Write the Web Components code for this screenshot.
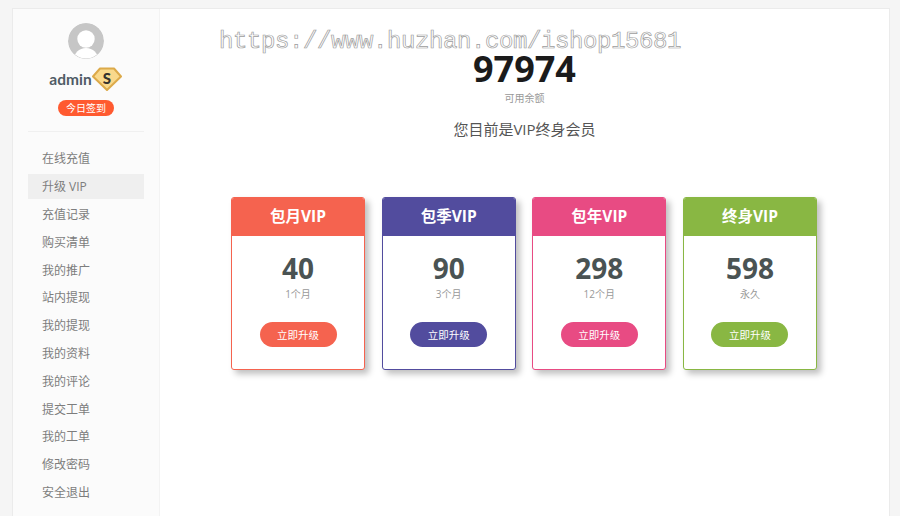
<!DOCTYPE html>
<html lang="zh-CN"><head><meta charset="utf-8"><title>VIP</title>
<style>
html,body{margin:0;height:100%;overflow:hidden;background:#f5f5f5}
body{font-family:"Open Sans","Noto Sans CJK SC",sans-serif;padding:8px 10px 0 12px;box-sizing:border-box;height:516px}
</style></head><body>
<user-shell>
<side-bar slot="side" name="admin">
<nav-item>在线充值</nav-item><nav-item active>升级 VIP</nav-item><nav-item>充值记录</nav-item><nav-item>购买清单</nav-item><nav-item>我的推广</nav-item><nav-item>站内提现</nav-item><nav-item>我的提现</nav-item><nav-item>我的资料</nav-item><nav-item>我的评论</nav-item><nav-item>提交工单</nav-item><nav-item>我的工单</nav-item><nav-item>修改密码</nav-item><nav-item>安全退出</nav-item>
</side-bar>
<vip-page>
<vip-card style="--c:#f5634f" title="包月VIP" price="40" term="1个月"></vip-card>
<vip-card style="--c:#524c9e" title="包季VIP" price="90" term="3个月"></vip-card>
<vip-card style="--c:#e84b83" title="包年VIP" price="298" term="12个月"></vip-card>
<vip-card style="--c:#89b743" title="终身VIP" price="598" term="永久"></vip-card>
</vip-page>
</user-shell>
<script>
function def(name,html,init){
  customElements.define(name,class extends HTMLElement{
    connectedCallback(){
      if(this.shadowRoot)return;
      const r=this.attachShadow({mode:'open'});
      r.innerHTML=html;
      if(init)init(this,r);
    }
  });
}
def('user-shell',`<style>
:host{display:flex;height:508px;background:#fff;border:1px solid #ebebeb;border-bottom:0;box-sizing:border-box;width:878px}
</style><slot name="side"></slot><slot></slot>`);
def('side-bar',`<style>
:host{display:block;width:147px;flex:none;background:#fbfbfb;border-right:1px solid #f3f3f3;box-sizing:border-box;padding:14px 15px 0 15px}
.top{display:flex;flex-direction:column;align-items:center;border-bottom:1px solid #f0f0f0;height:109px;box-sizing:border-box}
.av{width:36px;height:36px;border-radius:50%;display:block}
.nm{display:flex;align-items:center;margin-top:8px;height:24px;font:700 15.5px/24px Lato,"Open Sans",sans-serif;color:#4f5b66;margin-left:-1px}
.nm svg{display:block}
.btn{margin-top:9px;width:56px;height:16px;border-radius:8px;background:#ff5a30;color:#fff;font-size:10px;line-height:16px;text-align:center}
nav{display:block;margin-top:13.4px}
</style>
<div class="top">
<svg class="av" viewBox="0 0 36 36"><circle cx="18" cy="18" r="18" fill="#c6c6c6"/><clipPath id="c"><circle cx="18" cy="18" r="17.5"/></clipPath><g clip-path="url(#c)" fill="#fff"><circle cx="18" cy="16" r="8.7"/><ellipse cx="18" cy="37" rx="12.5" ry="12"/></g></svg>
<div class="nm"><span id="n"></span><svg width="30" height="24" viewBox="0 0 30 24"><path d="M8 1.5H22L29 9.5 15 23 1 9.5Z" fill="#f9d98c" stroke="#dcaa4a" stroke-width="2" stroke-linejoin="round"/><text x="15" y="17" text-anchor="middle" font-family="Lato,sans-serif" font-weight="900" font-size="15" fill="#33322e">S</text></svg></div>
<div class="btn">今日签到</div>
</div>
<nav><slot></slot></nav>`,(h,r)=>{r.getElementById('n').textContent=h.getAttribute('name')});
def('nav-item',`<style>
:host{display:block;height:27.8px;line-height:27px;padding-left:14px;font-size:12px;color:#7d7d7d}
:host([active]){background:#efefef;height:25px;margin:.6px 0 2.2px;line-height:25px}
</style><slot></slot>`);
def('vip-page',`<style>
:host{display:block;flex:1;min-width:0;position:relative;text-align:center}
.wm{position:absolute;left:59px;top:21px;font:400 24px/24px "Liberation Mono",monospace;letter-spacing:-.4px;color:#fff;-webkit-text-stroke:.7px #9c9c9c;white-space:nowrap;opacity:.99}
.bal{padding-top:45px;font-size:36px;line-height:30px;font-weight:700;color:#1b1b1b}
.lab{font-size:10px;line-height:14px;margin-top:7px;color:#999}
.st{font-size:15px;line-height:20px;margin-top:14px;color:#555}
.row{display:flex;justify-content:center;gap:16.67px;margin-top:58px;padding-right:1px}
</style>
<div class="bal">97974</div><div class="lab">可用余额</div><div class="st">您目前是VIP终身会员</div>
<div class="row"><slot></slot></div>
<div class="wm">https://www.huzhan.com/ishop15681</div>`);
def('vip-card',`<style>
:host{display:block;width:134px;height:173px;box-sizing:border-box;border:1px solid var(--c);border-radius:3px;background:#fff;box-shadow:4px 4px 6px rgba(0,0,0,.25);overflow:hidden;text-align:center}
.h{background:var(--c);margin:-1px -1px 0;height:38.5px;line-height:39px;font-size:15.5px;font-weight:700;color:#fff}
.p{font-size:28px;line-height:38px;font-weight:700;color:#4a5353;margin-top:13px}
.t{font-size:10px;line-height:14px;color:#999;margin-top:0}
.b{width:77px;height:25px;border-radius:13px;background:var(--c);color:#fff;font-size:10.5px;line-height:26px;margin:21px auto 0}
</style><div class="h" id="h"></div><div class="p" id="p"></div><div class="t" id="t"></div><div class="b">立即升级</div>`,
(h,r)=>{r.getElementById('h').textContent=h.getAttribute('title');r.getElementById('p').textContent=h.getAttribute('price');r.getElementById('t').textContent=h.getAttribute('term')});
</script>
</body></html>
